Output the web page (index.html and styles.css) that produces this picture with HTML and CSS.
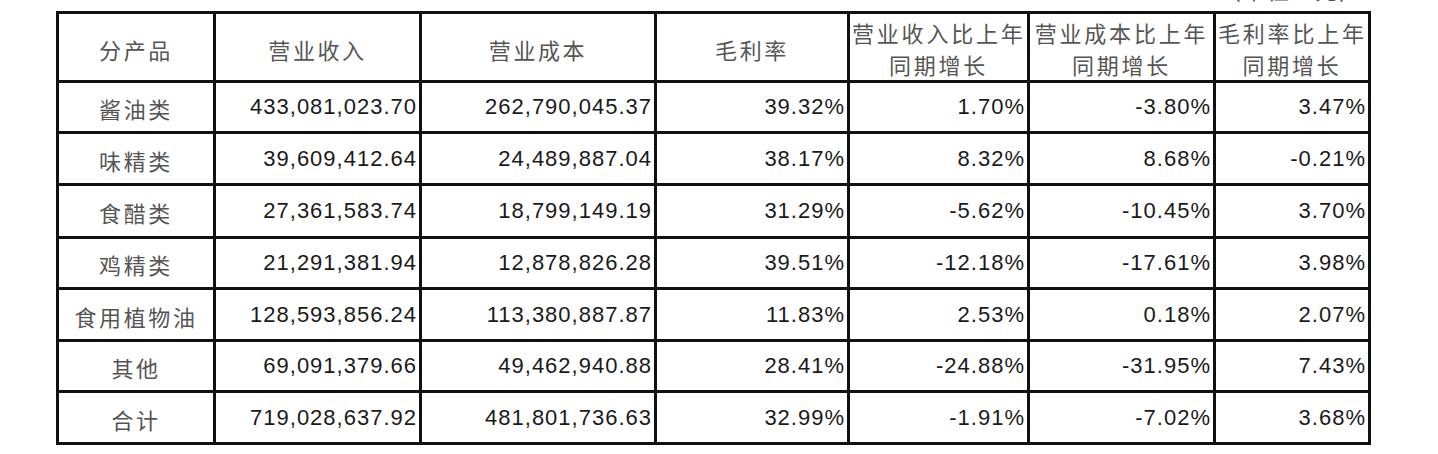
FILE: index.html
```html
<!DOCTYPE html>
<html lang="zh-CN">
<head>
<meta charset="utf-8">
<title>分产品经营情况</title>
<link rel="stylesheet" href="styles.css">
</head>
<body>
<div class="page">
  <div class="unit"><span class="unit-text">（单位：元）</span></div>
  <table class="report">
    <colgroup>
      <col class="c1"><col class="c2"><col class="c3"><col class="c4"><col class="c5"><col class="c6"><col class="c7">
    </colgroup>
    <thead>
      <tr class="head">
        <th>分产品</th>
        <th>营业收入</th>
        <th>营业成本</th>
        <th>毛利率</th>
        <th class="two">营业收入比上年<br>同期增长</th>
        <th class="two">营业成本比上年<br>同期增长</th>
        <th class="two">毛利率比上年<br>同期增长</th>
      </tr>
    </thead>
    <tbody>
      <tr class="r1"><td class="name">酱油类</td><td>433,081,023.70</td><td>262,790,045.37</td><td>39.32%</td><td>1.70%</td><td>-3.80%</td><td>3.47%</td></tr>
      <tr class="r2"><td class="name">味精类</td><td>39,609,412.64</td><td>24,489,887.04</td><td>38.17%</td><td>8.32%</td><td>8.68%</td><td>-0.21%</td></tr>
      <tr class="r3"><td class="name">食醋类</td><td>27,361,583.74</td><td>18,799,149.19</td><td>31.29%</td><td>-5.62%</td><td>-10.45%</td><td>3.70%</td></tr>
      <tr class="r4"><td class="name">鸡精类</td><td>21,291,381.94</td><td>12,878,826.28</td><td>39.51%</td><td>-12.18%</td><td>-17.61%</td><td>3.98%</td></tr>
      <tr class="r5"><td class="name">食用植物油</td><td>128,593,856.24</td><td>113,380,887.87</td><td>11.83%</td><td>2.53%</td><td>0.18%</td><td>2.07%</td></tr>
      <tr class="r6"><td class="name">其他</td><td>69,091,379.66</td><td>49,462,940.88</td><td>28.41%</td><td>-24.88%</td><td>-31.95%</td><td>7.43%</td></tr>
      <tr class="r7"><td class="name">合计</td><td>719,028,637.92</td><td>481,801,736.63</td><td>32.99%</td><td>-1.91%</td><td>-7.02%</td><td>3.68%</td></tr>
    </tbody>
  </table>
</div>
</body>
</html>
```

FILE: styles.css
```css
html, body {
  margin: 0;
  padding: 0;
  background: #ffffff;
}

.page {
  padding-left: 56px;
}

.unit {
  width: 1315px;
  height: 11px;
  overflow: hidden;
  text-align: right;
  box-sizing: border-box;
  padding-right: 8px;
}

.unit-text {
  display: block;
  margin-top: -24px;
  font-family: "Noto Sans CJK SC", sans-serif;
  font-size: 22px;
  line-height: 26px;
  letter-spacing: 2px;
  color: #555555;
}

.report {
  width: 1315px;
  table-layout: fixed;
  border-collapse: separate;
  border-spacing: 0;
  border-top: 3px solid #111111;
  border-left: 3px solid #111111;
}

.c1 { width: 157px; }
.c2 { width: 206px; }
.c3 { width: 235px; }
.c4 { width: 193px; }
.c5 { width: 180px; }
.c6 { width: 186px; }
.c7 { width: 155px; }

.report th,
.report td {
  border-right: 3px solid #111111;
  border-bottom: 3px solid #111111;
  padding: 0 2px 0 2px;
  vertical-align: middle;
  white-space: nowrap;
  overflow: hidden;
}

.report th {
  font-family: "Noto Sans CJK SC", sans-serif;
  font-weight: 400;
  font-size: 22px;
  line-height: 32px;
  letter-spacing: 2.6px;
  color: #555555;
  text-align: center;
  padding-top: 4px;
}

.report th.two {
  padding-top: 2px;
  letter-spacing: 2.8px;
}

.report td {
  font-family: "Liberation Sans", Arial, sans-serif;
  font-size: 22px;
  line-height: 26px;
  letter-spacing: 1px;
  color: #1a1a1a;
  text-align: right;
}

.report td.name {
  font-family: "Noto Sans CJK SC", sans-serif;
  letter-spacing: 2.6px;
  color: #555555;
  text-align: center;
  padding-top: 2px;
}

.head { height: 69px; }
.r1 { height: 51px; }
.r2 { height: 52px; }
.r3 { height: 53px; }
.r4 { height: 51px; }
.r5 { height: 52px; }
.r6 { height: 51px; }
.r7 { height: 52px; }
```
